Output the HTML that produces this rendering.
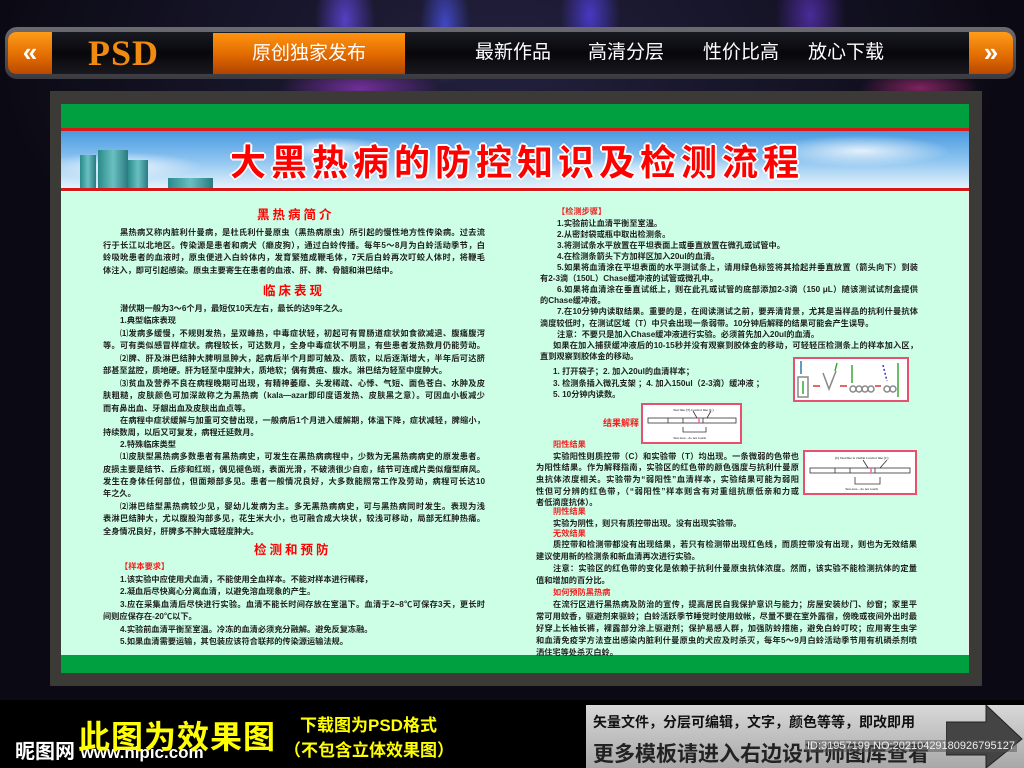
<!DOCTYPE html>
<html><head><meta charset="utf-8"><style>
*{margin:0;padding:0;box-sizing:border-box}
body{width:1024px;height:768px;overflow:hidden;position:relative;background:#000;font-family:"Liberation Sans","Noto Sans CJK SC",sans-serif}
.bg{position:absolute;left:0;top:0;width:1024px;height:700px;background:
radial-gradient(ellipse 30px 60px at 345px 20px,rgba(110,80,255,.7),transparent),
radial-gradient(ellipse 25px 60px at 445px 25px,rgba(80,90,255,.7),transparent),
radial-gradient(ellipse 30px 55px at 590px 15px,rgba(90,70,255,.7),transparent),
radial-gradient(ellipse 35px 60px at 810px 15px,rgba(110,60,230,.6),transparent),
radial-gradient(ellipse 80px 25px at 360px 88px,rgba(170,60,220,.6),transparent),
radial-gradient(ellipse 60px 20px at 920px 88px,rgba(200,50,140,.6),transparent),
radial-gradient(ellipse 500px 300px at 500px 60px,#23203e,#0b0a14)}
.nav{position:absolute;left:5px;top:27px;width:1011px;height:52px;border-radius:12px;background:linear-gradient(#6a6a70,#3a3a40);}
.navin{position:absolute;left:8px;top:32px;width:1005px;height:42px;border-radius:8px;background:linear-gradient(#1a1a22,#07070b 50%,#18181e)}
.btn{position:absolute;top:32px;width:44px;height:42px;background:linear-gradient(#ff9c1a,#e06a00 60%,#b84800);color:#fff;font-size:26px;font-weight:bold;text-align:center;line-height:40px}
.orange{position:absolute;left:213px;top:33px;width:192px;height:41px;background:linear-gradient(#ff9410,#e06800 55%,#b04400);color:#fff;font-size:19px;text-align:center;line-height:41px}
.psd{position:absolute;left:88px;top:32px;font-family:"Liberation Serif",serif;font-weight:bold;font-size:36px;color:#f08a10;letter-spacing:1px;line-height:42px}
.ni{position:absolute;top:42px;color:#fff;font-size:19px;line-height:22px}
.panel{position:absolute;left:50px;top:91px;width:932px;height:595px;background:#3c3a36}
.inner{position:absolute;left:61px;top:104px;width:908px;height:569px;background:#ccffe6;border-right:2px solid #eee}
.g1{position:absolute;left:61px;top:104px;width:908px;height:25px;background:#00a040}
.r1{position:absolute;left:61px;top:128px;width:908px;height:3px;background:#d81818}
.ban{position:absolute;left:61px;top:131px;width:908px;height:58px;background:
radial-gradient(ellipse 60px 12px at 270px 18px,rgba(255,255,255,.85),transparent),
radial-gradient(ellipse 90px 16px at 800px 20px,rgba(255,255,255,.8),transparent),
radial-gradient(ellipse 80px 14px at 60px 35px,rgba(255,255,255,.8),transparent),
radial-gradient(ellipse 140px 20px at 600px 45px,rgba(255,255,255,.8),transparent),
linear-gradient(#4a9ae0,#8cc4f0 50%,#e8f4fc)}
.r2{position:absolute;left:61px;top:188px;width:908px;height:4px;background:#d81818;border-bottom:1px solid #fff}
.bld{position:absolute;background:linear-gradient(90deg,#2a8a8a,#6ac0c0,#2a7a80)}
.title{position:absolute;left:63px;top:136px;width:908px;text-align:center;font-size:36px;font-weight:bold;color:#f00;letter-spacing:5px;line-height:48px;font-family:"Noto Sans CJK SC",sans-serif;text-shadow:2px 0 #fff,-2px 0 #fff,0 2px #fff,0 -2px #fff,1px 1px #fff,-1px -1px #fff,1px -1px #fff,-1px 1px #fff}
.g2{position:absolute;left:61px;top:655px;width:908px;height:18px;background:#00a040}
.l{position:absolute;font-size:8.2px;line-height:12px;color:#222;font-weight:bold;white-space:nowrap;font-family:"Liberation Sans","Noto Sans CJK SC",sans-serif}
.j{text-align:justify;text-align-last:justify}
.h{position:absolute;font-size:12.5px;font-weight:bold;color:#f00;letter-spacing:3px;line-height:16px;white-space:nowrap}
.red{color:#f02020}
.pic{position:absolute;background:#fff;border:2px solid #e85070}
.foot1{position:absolute;left:78px;top:712px;color:#ff0;font-size:32px;font-weight:bold;letter-spacing:1px}
.foot2{position:absolute;color:#ff0;font-size:17px;font-weight:bold;white-space:nowrap}
.nip{position:absolute;left:15px;top:735px;color:#fff;font-size:20px;font-weight:bold}
.gbox{position:absolute;left:586px;top:705px;width:438px;height:63px;background:linear-gradient(#d8d8d8,#a8a8a8)}
</style></head><body>
<div class="bg"></div>
<div class="nav"></div><div class="navin"></div>
<div class="btn" style="left:8px;border-radius:8px 0 0 8px">«</div>
<div class="btn" style="left:969px;border-radius:0 8px 8px 0">»</div>
<div class="psd">PSD</div>
<div class="orange">原创独家发布</div>
<div class="ni" style="left:475px">最新作品</div>
<div class="ni" style="left:588px">高清分层</div>
<div class="ni" style="left:703px">性价比高</div>
<div class="ni" style="left:808px">放心下载</div>

<div class="panel"></div>
<div class="inner"></div>
<div class="g1"></div><div class="r1"></div>
<div class="ban"></div>
<div class="bld" style="left:80px;top:155px;width:16px;height:33px"></div>
<div class="bld" style="left:98px;top:150px;width:30px;height:38px"></div>
<div class="bld" style="left:128px;top:160px;width:20px;height:28px"></div>
<div class="bld" style="left:168px;top:178px;width:45px;height:10px"></div>
<div class="title">大黑热病的防控知识及检测流程</div>
<div class="r2"></div>
<div class="g2"></div>

<!-- left column -->
<div class="h" style="left:257px;top:207px">黑热病简介</div>
<div class="l j" style="left:120px;top:227px;width:365px">黑热病又称内脏利什曼病，是杜氏利什曼原虫（黑热病原虫）所引起的慢性地方性传染病。过去流</div>
<div class="l j" style="left:103px;top:240px;width:382px">行于长江以北地区。传染源是患者和病犬（癞皮狗），通过白蛉传播。每年5～8月为白蛉活动季节，白</div>
<div class="l j" style="left:103px;top:252px;width:382px">蛉吸吮患者的血液时，原虫便进入白蛉体内，发育繁殖成鞭毛体，7天后白蛉再次叮蛟人体时，将鞭毛</div>
<div class="l" style="left:103px;top:265px">体注入，即可引起感染。原虫主要寄生在患者的血液、肝、脾、骨髓和淋巴结中。</div>
<div class="h" style="left:263px;top:283px">临床表现</div>
<div class="l" style="left:120px;top:303px">潜伏期一般为3～6个月，最短仅10天左右，最长的达9年之久。</div>
<div class="l" style="left:120px;top:315px">1.典型临床表现</div>
<div class="l j" style="left:120px;top:328px;width:365px">⑴发病多缓慢，不规则发热，呈双峰热，中毒症状轻，初起可有胃肠道症状如食欲减退、腹痛腹泻</div>
<div class="l j" style="left:103px;top:340px;width:382px">等。可有类似感冒样症状。病程较长，可达数月，全身中毒症状不明显，有些患者发热数月仍能劳动。</div>
<div class="l j" style="left:120px;top:353px;width:365px">⑵脾、肝及淋巴结肿大脾明显肿大，起病后半个月即可触及、质软，以后逐渐增大，半年后可达脐</div>
<div class="l" style="left:103px;top:365px">部甚至盆腔，质地硬。肝为轻至中度肿大，质地软；偶有黄疸、腹水。淋巴结为轻至中度肿大。</div>
<div class="l j" style="left:120px;top:378px;width:365px">⑶贫血及营养不良在病程晚期可出现，有精神萎靡、头发稀疏、心悸、气短、面色苍白、水肿及皮</div>
<div class="l j" style="left:103px;top:390px;width:382px">肤粗糙，皮肤颜色可加深故称之为黑热病（kala—azar即印度语发热、皮肤黑之意）。可因血小板减少</div>
<div class="l" style="left:103px;top:403px">而有鼻出血、牙龈出血及皮肤出血点等。</div>
<div class="l j" style="left:120px;top:415px;width:365px">在病程中症状缓解与加重可交替出现，一般病后1个月进入缓解期，体温下降，症状减轻，脾缩小，</div>
<div class="l" style="left:103px;top:427px">持续数周，以后又可复发，病程迁延数月。</div>
<div class="l" style="left:120px;top:439px">2.特殊临床类型</div>
<div class="l j" style="left:120px;top:451px;width:365px">⑴皮肤型黑热病多数患者有黑热病史，可发生在黑热病病程中，少数为无黑热病病史的原发患者。</div>
<div class="l j" style="left:103px;top:464px;width:382px">皮损主要是结节、丘疹和红斑，偶见褪色斑，表面光滑，不破溃很少自愈，结节可连成片类似瘤型麻风。</div>
<div class="l j" style="left:103px;top:476px;width:382px">发生在身体任何部位，但面颊部多见。患者一般情况良好，大多数能照常工作及劳动，病程可长达10</div>
<div class="l" style="left:103px;top:488px">年之久。</div>
<div class="l j" style="left:120px;top:501px;width:365px">⑵淋巴结型黑热病较少见，婴幼儿发病为主。多无黑热病病史，可与黑热病同时发生。表现为浅</div>
<div class="l j" style="left:103px;top:513px;width:382px">表淋巴结肿大，尤以腹股沟部多见，花生米大小，也可融合成大块状，较浅可移动，局部无红肿热痛。</div>
<div class="l" style="left:103px;top:526px">全身情况良好，肝脾多不肿大或轻度肿大。</div>
<div class="h" style="left:254px;top:542px">检测和预防</div>
<div class="l red" style="left:120px;top:561px">【样本要求】</div>
<div class="l" style="left:120px;top:574px">1.该实验中应使用犬血清，不能使用全血样本。不能对样本进行稀释，</div>
<div class="l" style="left:120px;top:586px">2.凝血后尽快离心分离血清，以避免溶血现象的产生。</div>
<div class="l j" style="left:120px;top:599px;width:365px">3.应在采集血清后尽快进行实验。血清不能长时间存放在室温下。血清于2~8℃可保存3天，更长时</div>
<div class="l" style="left:103px;top:611px">间则应保存在-20℃以下。</div>
<div class="l" style="left:120px;top:624px">4.实验前血清平衡至室温。冷冻的血清必须充分融解。避免反复冻融。</div>
<div class="l" style="left:120px;top:636px">5.如果血清需要运输，其包装应该符合联邦的传染源运输法规。</div>

<!-- right column -->
<div class="l red" style="left:557px;top:206px">【检测步骤】</div>
<div class="l" style="left:557px;top:218px">1.实验前让血清平衡至室温。</div>
<div class="l" style="left:557px;top:229px">2.从密封袋或瓶中取出检测条。</div>
<div class="l" style="left:557px;top:240px">3.将测试条水平放置在平坦表面上或垂直放置在微孔或试管中。</div>
<div class="l" style="left:557px;top:251px">4.在检测条箭头下方加样区加入20ul的血清。</div>
<div class="l j" style="left:557px;top:262px;width:361px">5.如果将血清涂在平坦表面的水平测试条上，请用绿色标签将其拾起并垂直放置（箭头向下）到装</div>
<div class="l" style="left:540px;top:273px">有2-3滴（150L）Chase缓冲液的试管或微孔中。</div>
<div class="l j" style="left:557px;top:284px;width:361px">6.如果将血清涂在垂直试纸上，则在此孔或试管的底部添加2-3滴（150 μL）随该测试试剂盒提供</div>
<div class="l" style="left:540px;top:295px">的Chase缓冲液。</div>
<div class="l j" style="left:557px;top:306px;width:361px">7.在10分钟内读取结果。重要的是，在阅读测试之前，要弄清背景，尤其是当样品的抗利什曼抗体</div>
<div class="l" style="left:540px;top:318px">滴度较低时，在测试区域（T）中只会出现一条弱带。10分钟后解释的结果可能会产生误导。</div>
<div class="l" style="left:557px;top:329px">注意：不要只是加入Chase缓冲液进行实验。必须首先加入20ul的血清。</div>
<div class="l j" style="left:553px;top:340px;width:365px">如果在加入捕获缓冲液后的10-15秒并没有观察到胶体金的移动，可轻轻压检测条上的样本加入区，</div>
<div class="l" style="left:540px;top:351px">直到观察到胶体金的移动。</div>
<div class="l" style="left:553px;top:366px">1. 打开袋子；2. 加入20ul的血清样本；</div>
<div class="l" style="left:553px;top:378px">3. 检测条插入微孔支架 ；4. 加入150ul（2-3滴）缓冲液 ；</div>
<div class="l" style="left:553px;top:389px">5. 10分钟内读数。</div>

<div class="pic" style="left:793px;top:357px;width:116px;height:45px">
<svg width="112" height="41" viewBox="0 0 112 41"><g stroke-width="1.5" fill="none">
<line x1="6" y1="2" x2="6" y2="15" stroke="#37a"/><rect x="3" y="18" width="10" height="20" stroke="#888"/><line x1="8" y1="22" x2="8" y2="35" stroke="#3a3"/>
<line x1="18" y1="27" x2="25" y2="27" stroke="#d33"/><path d="M28 14 L34 30 L41 12" stroke="#888"/><line x1="40" y1="12" x2="42" y2="4" stroke="#3a3"/>
<line x1="45" y1="27" x2="52" y2="27" stroke="#d33"/><line x1="57" y1="6" x2="57" y2="24" stroke="#3a3"/><g stroke="#888"><circle cx="58" cy="30" r="3"/><circle cx="64" cy="30" r="3"/><circle cx="70" cy="30" r="3"/><circle cx="76" cy="30" r="3"/></g>
<line x1="80" y1="27" x2="86" y2="27" stroke="#d33"/><path d="M88 6 L92 22" stroke="#33c" stroke-dasharray="2 2"/><g stroke="#888"><circle cx="92" cy="30" r="3"/><circle cx="98" cy="30" r="3"/></g>
<line x1="103" y1="4" x2="103" y2="38" stroke="#3a3"/></g></svg></div>

<div class="l red" style="left:603px;top:417px;font-size:9px">结果解释</div>
<div class="pic" style="left:641px;top:403px;width:101px;height:41px">
<svg width="97" height="37" viewBox="0 0 97 37"><g fill="none" stroke="#333" stroke-width=".8">
<rect x="5" y="13" width="88" height="5"/><line x1="25" y1="13" x2="25" y2="18"/><line x1="40" y1="13" x2="40" y2="18"/><line x1="60" y1="13" x2="60" y2="18"/>
<line x1="50" y1="6" x2="54" y2="13"/><line x1="68" y1="6" x2="64" y2="13"/><path d="M40 22 V27 H63 V22"/></g>
<line x1="56" y1="13" x2="56" y2="18" stroke="#e6a" stroke-width="1.5"/>
<text x="30" y="6" font-size="3.5" font-family="Liberation Serif">Test line (T) Control line (C)</text>
<text x="30" y="34" font-size="3.5" font-family="Liberation Serif">Test area - do not touch</text></svg></div>

<div class="l red" style="left:553px;top:439px">阳性结果</div>
<div class="l j" style="left:553px;top:451px;width:246px">实验阳性则质控带（C）和实验带（T）均出现。一条微弱的色带也</div>
<div class="l j" style="left:536px;top:462px;width:263px">为阳性结果。作为解释指南，实验区的红色带的颜色强度与抗利什曼原</div>
<div class="l j" style="left:536px;top:474px;width:263px">虫抗体浓度相关。实验带为“弱阳性”血清样本，实验结果可能为弱阳</div>
<div class="l j" style="left:536px;top:486px;width:263px">性但可分辨的红色带，（“弱阳性”样本则含有对重组抗原低亲和力或</div>
<div class="l" style="left:536px;top:497px">者低滴度抗体）。</div>
<div class="pic" style="left:803px;top:450px;width:114px;height:45px">
<svg width="110" height="41" viewBox="0 0 110 41"><g fill="none" stroke="#333" stroke-width=".8">
<rect x="5" y="16" width="100" height="5"/><line x1="30" y1="16" x2="30" y2="21"/><line x1="45" y1="16" x2="45" y2="21"/><line x1="70" y1="16" x2="70" y2="21"/>
<line x1="58" y1="8" x2="63" y2="16"/><line x1="82" y1="8" x2="75" y2="16"/><path d="M50 25 V32 H75 V25"/></g>
<line x1="66" y1="16" x2="66" y2="21" stroke="#e6a" stroke-width="1.5"/>
<text x="30" y="7" font-size="3.5" font-family="Liberation Serif">(b) Test line is visible Control line (C)</text>
<text x="40" y="38" font-size="3.5" font-family="Liberation Serif">Test area - do not touch</text></svg></div>

<div class="l red" style="left:553px;top:506px">阴性结果</div>
<div class="l" style="left:553px;top:518px">实验为阴性，则只有质控带出现。没有出现实验带。</div>
<div class="l red" style="left:553px;top:528px">无效结果</div>
<div class="l j" style="left:553px;top:539px;width:364px">质控带和检测带都没有出现结果，若只有检测带出现红色线，而质控带没有出现，则也为无效结果</div>
<div class="l" style="left:536px;top:551px">建议使用新的检测条和新血清再次进行实验。</div>
<div class="l j" style="left:553px;top:563px;width:364px">注意：实验区的红色带的变化是依赖于抗利什曼原虫抗体浓度。然而，该实验不能检测抗体的定量</div>
<div class="l" style="left:536px;top:575px">值和增加的百分比。</div>
<div class="l red" style="left:553px;top:587px">如何预防黑热病</div>
<div class="l j" style="left:553px;top:599px;width:364px">在流行区进行黑热病及防治的宣传，提高居民自我保护意识与能力；房屋安装纱门、纱窗；家里平</div>
<div class="l j" style="left:536px;top:611px;width:381px">常可用蚊香，驱避剂来驱蛉；白蛉活跃季节睡觉时使用蚊帐，尽量不要在室外露宿，傍晚或夜间外出时最</div>
<div class="l j" style="left:536px;top:623px;width:381px">好穿上长袖长裤，裸露部分涂上驱避剂；保护易感人群，加强防蛉措施，避免白蛉叮咬；应用寄生虫学</div>
<div class="l j" style="left:536px;top:635px;width:381px">和血清免疫学方法查出感染内脏利什曼原虫的犬应及时杀灭，每年5～9月白蛉活动季节用有机磷杀剂喷</div>
<div class="l" style="left:536px;top:647px">洒住宅等处杀灭白蛉。</div>

<!-- footer -->
<div class="nip">昵图网 <span style="font-size:17px">www.nipic.com</span></div>
<div class="foot1">此图为效果图</div>
<div class="foot2" style="left:300px;top:711px">下载图为PSD格式</div>
<div class="foot2" style="left:284px;top:736px">（不包含立体效果图）</div>
<div class="gbox"></div>
<svg style="position:absolute;left:946px;top:705px" width="78" height="63"><path d="M0 17 H40 V0 L76 34 L40 63 V50 H0 Z" fill="#444" stroke="#222"/></svg>
<div style="position:absolute;left:593px;top:712px;font-size:14px;font-weight:bold;color:#111;white-space:nowrap">矢量文件，分层可编辑，文字，颜色等等，即改即用</div>
<div style="position:absolute;left:593px;top:738px;font-size:21px;font-weight:bold;color:#222;white-space:nowrap">更多模板请进入右边设计师图库查看</div>
<div style="position:absolute;left:805px;top:740px;font-size:11px;color:#eee;white-space:nowrap;background:rgba(80,80,80,.5);padding:0 2px">ID:31957199 NO:20210429180926795127</div>
</body></html>
